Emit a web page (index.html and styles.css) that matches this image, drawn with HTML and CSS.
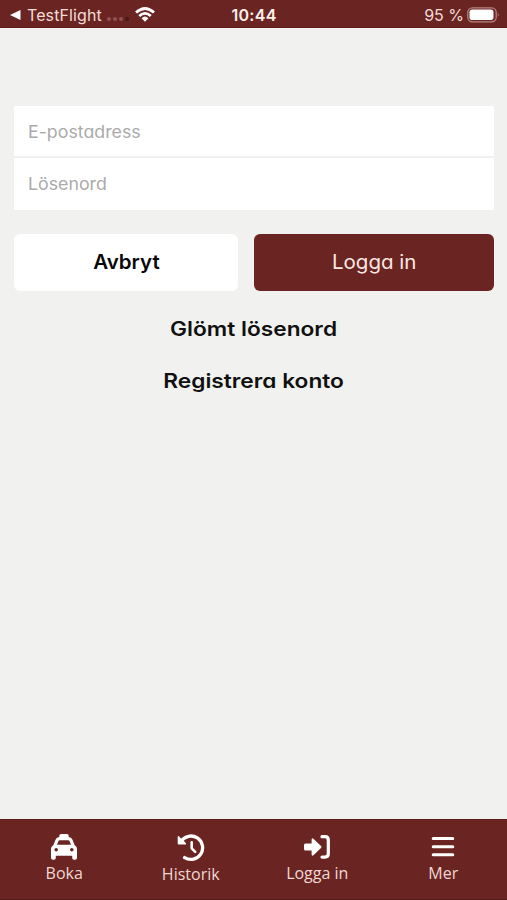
FILE: index.html
```html
<!DOCTYPE html>
<html lang="sv">
<head>
<meta charset="utf-8">
<title>Logga in</title>
<link rel="stylesheet" href="styles.css">
</head>
<body>
<header class="status">
  <div class="status-left">
    <svg class="back" width="11" height="10" viewBox="0 0 11 10"><path d="M0 5 10.5 0V10Z"/></svg>
    <span class="app-name">TestFlight</span>
    <span class="signal"><i></i><i></i><i></i><i class="dim"></i></span>
    <svg class="wifi" width="20" height="15" viewBox="0 0 20 15"><g fill="none" stroke="#fff" stroke-width="2.7"><path d="M1 5.6Q10-2.6 19 5.6"/><path d="M4.2 9.1Q10 3.7 15.8 9.1"/></g><path d="M6.6 11.2Q10 8 13.4 11.2L10 14.7Z"/></svg>
  </div>
  <time class="clock">10:44</time>
  <div class="status-right">
    <span class="percent">95 %</span>
    <svg width="33" height="16" viewBox="0 0 33 16"><rect x=".8" y=".8" width="28.4" height="14" rx="4.5" fill="none" stroke="#b58481" stroke-width="1.3"/><rect x="2.5" y="2.5" width="24" height="10.6" rx="2.8"/><path d="M30.8 5.3Q32.6 7.8 30.8 10.3Z" fill="#b58481"/></svg>
  </div>
</header>
<main class="content">
  <form class="login">
    <div class="fields">
      <label class="field"><span class="placeholder">E-postadress</span></label>
      <label class="field"><span class="placeholder">Lösenord</span></label>
    </div>
    <div class="actions">
      <button type="button" class="button cancel"><span class="label">Avbryt</span></button>
      <button type="button" class="button submit"><span class="label">Logga in</span></button>
    </div>
    <a class="link forgot">Glömt lösenord</a>
    <a class="link register">Registrera konto</a>
  </form>
</main>
<nav class="tabs">
  <a class="tab">
    <svg width="28" height="28" viewBox="0 0 28 28"><path fill-rule="evenodd" d="M9.3 4V2.7Q9.3 1 11 1H17Q18.7 1 18.7 2.7V4Q21.4 4.1 22.5 6.8L24.7 12.2Q27 13.2 27 16V24.8Q27 26.7 25.1 26.7H24Q22.2 26.7 22.2 24.8V22.7H5.8V24.8Q5.8 26.7 4 26.7H2.9Q1 26.7 1 24.8V16Q1 13.2 3.3 12.2L5.5 6.8Q6.6 4 9.3 4ZM9.5 7.3Q8.8 7.3 8.5 8L7 11.7H21L19.5 8Q19.2 7.3 18.5 7.3ZM6.2 15A1.8 1.8 0 1 0 6.2 18.6 1.8 1.8 0 0 0 6.2 15ZM21.8 15A1.8 1.8 0 1 0 21.8 18.6 1.8 1.8 0 0 0 21.8 15Z"/></svg>
    <span>Boka</span>
  </a>
  <a class="tab history">
    <svg width="28" height="28" viewBox="0 0 28 28"><g fill="none" stroke="#fff" stroke-linecap="round" stroke-linejoin="round"><path stroke-width="3.3" d="M4.2 7.2A11.7 11.7 0 1 1 7.6 23.6"/><path stroke-width="2.6" d="M14.7 8.4V14.3L18.2 17.8"/></g><path d="M.7 3.1Q.7 1.3 2 2.5L8.6 8.7Q9.8 10.5 8 10.5H1.9Q.7 10.5.7 9.3Z"/></svg>
    <span>Historik</span>
  </a>
  <a class="tab">
    <svg width="28" height="28" viewBox="0 0 28 28"><path d="M1 12.1Q1 10.4 2.6 10.4H8.6V6.9Q8.6 4.1 10.7 5.9L18 13Q19.1 14 18 15L10.7 22Q8.6 23.8 8.6 21V17.6H2.6Q1 17.6 1 16Z"/><path fill="none" stroke="#fff" stroke-width="3.2" stroke-linecap="round" d="M19 3.7H22Q25.3 3.7 25.3 7V20.8Q25.3 24.1 22 24.1H19"/></svg>
    <span>Logga in</span>
  </a>
  <a class="tab more">
    <svg width="28" height="28" viewBox="0 0 28 28"><path fill="none" stroke="#fff" stroke-width="3" stroke-linecap="round" d="M4.2 5.5H23.8M4.2 13.7H23.8M4.2 21.7H23.8"/></svg>
    <span>Mer</span>
  </a>
</nav>
</body>
</html>
```
FILE: styles.css
```css
* { box-sizing: border-box; }
body {
  margin: 0;
  height: 900px;
  display: flex;
  flex-direction: column;
  background: #f1f1ef;
  font-family: Inter, "Liberation Sans", sans-serif;
  overflow: hidden;
}
svg { display: block; fill: #fff; flex: none; }
span { white-space: nowrap; }
.status {
  height: 28px;
  flex: none;
  display: grid;
  grid-template-columns: 1fr auto 1fr;
  align-items: center;
  padding: 2px 7px 0 10px;
  background: #6a2422;
  border-bottom: 1px solid #5c1b19;
  color: #f3dcd7;
}
.status-left, .status-right { display: flex; align-items: center; }
.status-right { justify-content: flex-end; gap: 3px; }
.app-name { margin-left: 6px; font-size: 16px; letter-spacing: .1px; }
.signal { display: flex; gap: 2px; margin: 9px 0 0 5px; }
.signal i { width: 4px; height: 4px; border-radius: 50%; background: #915350; }
.signal .dim { background: #491716; }
.wifi { margin-left: 6px; }
.clock { margin-right: 2px; font-size: 16px; font-weight: 600; letter-spacing: .3px; color: #fff0ec; }
.percent { font-size: 16px; }
.content { flex: 1; padding: 78px 13px 0 14px; }
.login { display: flex; flex-direction: column; font-feature-settings: "cv11"; }
.fields { background: #fff; border-radius: 1px; }
.field { display: flex; align-items: center; height: 52px; padding-left: 14px; font-size: 17px; color: #aaa; }
.field:first-child { padding-top: 1px; border-bottom: 2px solid #f0f0ef; }
.placeholder { transform: scaleX(1.045); transform-origin: left; }
.actions { display: grid; grid-template-columns: 224px 240px; gap: 16px; margin-top: 24px; }
.button { height: 57px; padding: 0 0 2px; border: 0; border-radius: 6px; font: inherit; font-size: 20px; font-feature-settings: inherit; }
.label { display: inline-block; transform: scaleX(1.025); }
.cancel { background: #fff; color: #080808; font-weight: 600; }
.submit { background: #6a2422; color: #fbe7e1; }
.link { align-self: center; font-size: 20px; line-height: 28px; font-weight: 600; color: #111; transform: scaleX(1.135); }
.forgot { margin-top: 24px; }
.register { margin-top: 24px; }
.tabs {
  height: 81px;
  flex: none;
  display: grid;
  grid-template-columns: repeat(4, 1fr);
  padding: 13px 0 0 1px;
  background: #6a2422;
  border-top: 1px solid #5c1b19;
  border-bottom: 1px solid #571a19;
  color: #f0d8d3;
  font-family: "Open Sans", "Noto Sans", sans-serif;
  font-size: 16px;
  line-height: 22px;
}
.tab { display: flex; flex-direction: column; align-items: center; gap: 1px; }
.history { padding-top: 1px; }
.more { padding-right: 1px; }
```
